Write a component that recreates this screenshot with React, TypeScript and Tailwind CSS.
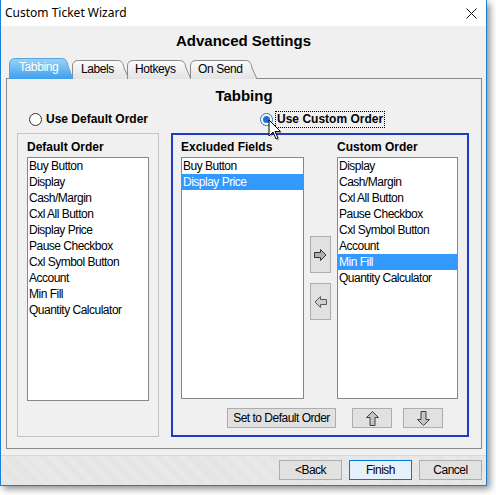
import React from "react";

const defaultOrder = [
  "Buy Button",
  "Display",
  "Cash/Margin",
  "Cxl All Button",
  "Display Price",
  "Pause Checkbox",
  "Cxl Symbol Button",
  "Account",
  "Min Fill",
  "Quantity Calculator",
];

const excluded = ["Buy Button", "Display Price"];

const customOrder = [
  "Display",
  "Cash/Margin",
  "Cxl All Button",
  "Pause Checkbox",
  "Cxl Symbol Button",
  "Account",
  "Min Fill",
  "Quantity Calculator",
];

function Tab({ id, label, width, active, pad, className }: { id: string; label: string; width: number; active?: boolean; pad: number; className?: string }) {
  const h = 21;
  const y0 = active ? 0 : 2;
  const w = width;
  const d = `M0.5,${h} L0.5,${y0 + 6} Q0.5,${y0 + 0.5} 6.5,${y0 + 0.5} L${w - 13},${y0 + 0.5} C${w - 8},${y0 + 0.5} ${w - 7},${y0 + 3} ${w - 6},${y0 + 8} L${w - 1},${h}`;
  return (
    <div className={`relative h-[21px] shrink-0 ${active ? "z-10" : ""} ${className ?? ""}`} style={{ width }}>
      <svg className="absolute inset-0" width={w} height={h}>
        <defs>
          <linearGradient id={`tabgrad-${id}`} x1="0" y1="0" x2="0" y2="1">
            <stop offset="0" stopColor={active ? "#9ad4f8" : "#fbfbfb"} />
            <stop offset="1" stopColor={active ? "#3d9fec" : "#e3e3e3"} />
          </linearGradient>
        </defs>
        <path d={d + " Z"} fill={`url(#tabgrad-${id})`} stroke="none" />
        <path d={d} fill="none" stroke={active ? "#5aa3dc" : "#8a8a8a"} strokeWidth="1" />
      </svg>
      <span
        className={`relative block text-[12px] tracking-[-0.4px] leading-[19px] ${active ? "text-white pt-0" : "text-black pt-[2px]"}`}
        style={{ paddingLeft: pad }}
      >
        {label}
      </span>
    </div>
  );
}

function ListBox({ items, selected, className }: { items: string[]; selected?: string; className: string }) {
  return (
    <div className={`bg-white border border-[#828790] ${className}`}>
      {items.map((it) => (
        <div
          key={it}
          className={`h-[16px] leading-[16px] pl-[1px] text-[12px] tracking-[-0.5px] whitespace-nowrap ${
            it === selected ? "bg-[#3399ff] text-white" : "text-black"
          }`}
        >
          {it}
        </div>
      ))}
    </div>
  );
}

function RightArrow({ light }: { light?: boolean }) {
  return (
    <svg width="13" height="12" viewBox="0 0 13 12">
      <path
        d="M0.5,3.5 H6.5 V0.5 L12,6 L6.5,11.5 V8.5 H0.5 Z"
        fill={light ? "#cfcfcf" : "#b0b0b0"}
        stroke={light ? "#5a5a5a" : "#333"}
        strokeLinejoin="round"
      />
    </svg>
  );
}

function UpArrow() {
  return (
    <svg width="13" height="15" viewBox="0 0 13 15">
      <path d="M6.5,0.5 L12.5,6.5 H9 V14.5 H4 V6.5 H0.5 Z" fill="#c4c4c4" stroke="#404040" strokeLinejoin="round" />
    </svg>
  );
}

function Btn({ children, className }: { children: React.ReactNode; className: string }) {
  return (
    <div className={`flex items-center justify-center bg-[#e1e1e1] border border-[#adadad] text-[12px] tracking-[-0.5px] text-black ${className}`}>
      {children}
    </div>
  );
}

export default function App() {
  return (
    <div className="w-[496px] h-[495px] bg-white font-['Liberation_Sans',Arial,sans-serif] overflow-hidden">
      <div className="w-[487px] h-[486px] flex flex-col border-x border-b border-[#1a7fd4] bg-[#f0f0f0] shadow-[3px_3px_7px_rgba(0,0,0,0.45)] relative">
        {/* title bar */}
        <div className="h-[26px] bg-white flex items-center justify-between pl-[4px] pr-[9px]">
          <span className="text-[12px] text-black font-['Noto_Sans',sans-serif]">Custom Ticket Wizard</span>
          <svg width="11" height="11" viewBox="0 0 11 11">
            <path d="M0.5,0.5 L10.5,10.5 M10.5,0.5 L0.5,10.5" stroke="#111" strokeWidth="1" />
          </svg>
        </div>

        <div className="h-[30px] text-center text-[15px] leading-[30px] font-bold text-black">Advanced Settings</div>

        {/* tabs */}
        <div className="mt-[2px] h-[21px] flex pl-[8px] -mb-px relative z-10">
          <Tab id="tabbing" label="Tabbing" width={65} active pad={10} />
          <Tab id="labels" label="Labels" width={58} pad={9} className="-ml-[2px]" />
          <Tab id="hotkeys" label="Hotkeys" width={65} pad={8} className="-ml-[3px]" />
          <Tab id="onsend" label="On Send" width={68} pad={8} className="-ml-[2px]" />
        </div>

        {/* panel */}
        <div className="ml-[5px] mr-[4px] h-[371px] border border-[#898989] bg-[#f0f0f0] flex flex-col">
          <div className="pt-[5px] h-[29px] text-center text-[15px] leading-[24px] font-bold text-black">Tabbing</div>
          <div className="h-[22px] flex items-center pl-[22px] text-[12px] font-bold text-black">
            <div className="w-[13px] h-[13px] rounded-full border border-[#333] bg-white" />
            <span className="ml-[4px]">Use Default Order</span>
            <div className="ml-[112px] w-[13px] h-[13px] rounded-full border border-[#1874d0] bg-white flex items-center justify-center">
              <div className="w-[7px] h-[7px] rounded-full bg-[#1874d0]" />
            </div>
            <span className="ml-[2px] px-[1px] leading-[15px] border border-dotted border-black">Use Custom Order</span>
          </div>

          <div className="mt-[3px] flex pl-[10px]">
            {/* default order group */}
            <div className="w-[142px] h-[304px] border border-[#c4c4c4] pl-[9px] pt-[5px]">
              <div className="h-[18px] text-[12px] font-bold leading-[16px] text-black">Default Order</div>
              <ListBox items={defaultOrder} className="w-[122px] h-[244px]" />
            </div>

            {/* custom group */}
            <div className="ml-[12px] w-[298px] h-[304px] border-2 border-[#1f3cc6] pl-[8px] pt-[4px]">
              <div className="flex h-[18px] text-[12px] font-bold leading-[16px] text-black">
                <span className="w-[156px]">Excluded Fields</span>
                <span>Custom Order</span>
              </div>
              <div className="flex">
                <ListBox items={excluded} selected="Display Price" className="w-[123px] h-[242px]" />
                <div className="w-[33px] flex flex-col items-center pt-[79px] gap-[10px]">
                  <Btn className="w-[21px] h-[37px]">
                    <RightArrow />
                  </Btn>
                  <Btn className="w-[21px] h-[37px]">
                    <div className="rotate-180 flex">
                      <RightArrow light />
                    </div>
                  </Btn>
                </div>
                <ListBox items={customOrder} selected="Min Fill" className="w-[121px] h-[242px]" />
              </div>
              <div className="flex mt-[9px]">
                <Btn className="ml-[46px] w-[109px] h-[20px]">Set to Default Order</Btn>
                <Btn className="ml-[16px] w-[40px] h-[20px]">
                  <UpArrow />
                </Btn>
                <Btn className="ml-[11px] w-[40px] h-[20px]">
                  <div className="rotate-180 flex">
                    <UpArrow />
                  </div>
                </Btn>
              </div>
            </div>
          </div>
        </div>

        {/* footer */}
        <div className="mt-[6px] h-[30px] border-t border-[#d8d8d8] bg-[repeating-linear-gradient(45deg,#e2e2e2_0px,#e2e2e2_1px,#ebebeb_1px,#ebebeb_2px)] flex justify-end items-start pt-[4px] pr-[4px] gap-[7px]">
          <Btn className="w-[63px] h-[20px]">&lt;Back</Btn>
          <div className="w-[63px] h-[20px] flex items-center justify-center bg-[#e5f1fb] border border-[#0078d7] text-[12px] tracking-[-0.5px] text-black">
            Finish
          </div>
          <Btn className="w-[63px] h-[20px]">Cancel</Btn>
        </div>

        {/* mouse pointer */}
        <svg className="absolute left-[266px] top-[119px]" width="16" height="22" viewBox="0 0 16 22">
          <path d="M2,1 L2,17 L6,13 L9,20 L11,19 L8,12.5 L13.5,12.5 Z" fill="rgba(0,0,0,0.25)" transform="translate(1.5,1.5)" />
          <path d="M2,1 L2,17 L6,13 L9,20 L11,19 L8,12.5 L13.5,12.5 Z" fill="white" stroke="black" strokeWidth="1" strokeLinejoin="round" />
        </svg>
      </div>
    </div>
  );
}
